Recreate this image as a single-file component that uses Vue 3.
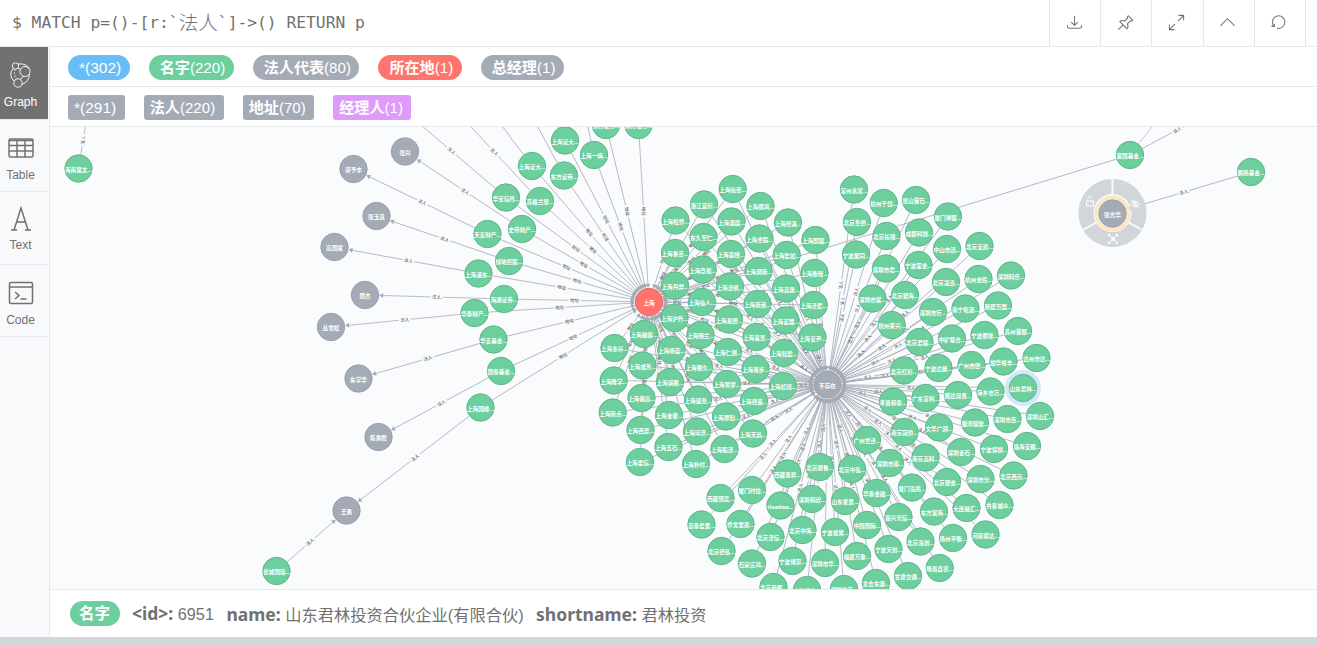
<template>
  <div class="frame">
    <header class="frame-header">
      <div class="query">$ MATCH p=()-[r:`<span class="cjk">法人</span>`]-&gt;() RETURN p</div>
      <div class="actions">
        <button v-for="a in actions" :key="a.name" :aria-label="a.name" class="action">
          <svg width="19" height="19" viewBox="0 0 20 20"><path :d="a.d" /></svg>
        </button>
      </div>
    </header>

    <div class="frame-body">
      <nav class="sidebar">
        <div class="tab tab-graph active">
          <svg width="24" height="28" viewBox="0 0 24 28">
            <circle cx="6.500" cy="5" r="3.200" />
            <circle cx="16" cy="10.500" r="5" />
            <circle cx="9" cy="22" r="4.200" />
            <path d="M9 3Q18 2 20 8M20.500 13Q20 21 13 23.500M4 7.500Q-1 14 5 20M11.500 18.500l3-3.500M9 7l2.500 1.500" />
            <path d="M6 8.500Q4.500 13 7.500 18" stroke-dasharray="1.500 1.500" />
          </svg>
          <span>Graph</span>
        </div>
        <div class="tab tab-table">
          <svg width="26" height="20" viewBox="0 0 26 20">
            <rect x="1" y="1" width="24" height="18" rx="1.500" />
            <path d="M1 2.500h24M1 7.500h24M1 13h24M9 2v17M17 2v17" />
          </svg>
          <span>Table</span>
        </div>
        <div class="tab tab-text">
          <svg width="22" height="26" viewBox="0 0 22 26">
            <path d="M4 24L11 2L18 24M6.500 16h9M1 24h6M15 24h6" />
          </svg>
          <span>Text</span>
        </div>
        <div class="tab tab-code">
          <svg width="26" height="24" viewBox="0 0 26 24">
            <rect x="1.500" y="1.500" width="23" height="21" rx="1.500" />
            <path d="M2 6h22M7 11l4 3.500l-4 3.500M12.500 18h6" />
          </svg>
          <span>Code</span>
        </div>
      </nav>

      <main class="content">
        <div class="legend">
          <span v-for="t in labels" :key="t.name" class="token round" :class="t.color">
            <b>{{ t.name }}</b>({{ t.count }})
          </span>
        </div>
        <div class="legend">
          <span v-for="t in types" :key="t.name" class="token" :class="t.color">
            <b>{{ t.name }}</b>({{ t.count }})
          </span>
        </div>

        <svg class="graph" width="1267" height="462" viewBox="50 127 1267 462">
          <g class="relationships">
            <g v-for="(e, i) in edges" :key="i" :transform="`translate(${e.x} ${e.y}) rotate(${e.angle})`">
              <path v-if="e.len > 16" :class="{ purple: e.purple }" :d="`M14 0H${e.mid - 6}M${e.mid + 6} 0H${e.end - 3}`" />
              <path v-else :d="`M14 0H${e.end - 3}`" />
              <polygon :points="`${e.end},0 ${e.end - 4},-2.5 ${e.end - 4},2.5`" />
              <text v-if="e.labelled" :transform="`translate(${e.mid} 0) rotate(${e.flip ? 180 : 0})`" y="1.600">{{ e.label }}</text>
            </g>
          </g>

          <g class="menu">
            <circle cx="1112.500" cy="213" r="26.500" class="menu-ring" />
            <path class="menu-split" d="M1112.500 195v-16M1097 222l-14 8M1128 222l14 8" />
            <circle cx="1112.500" cy="213.500" r="16" class="menu-halo" />
            <g class="menu-icons">
              <path d="M1086.500 201h7v5h-7zM1088 201v-2.500a1.800 1.800 0 0 1 3.600 0" />
              <path d="M1130.500 204q4.500-6 9 0q-4.500 6-9 0zM1131.500 200l7 8" />
              <circle cx="1135" cy="204" r="1.500" />
              <path d="M1109 235l8 8M1117 235l-8 8M1108.500 236.500v-2h2M1115.500 234.500h2v2M1117.500 241.500v2h-2M1110.500 243.500h-2v-2" />
              <circle cx="1113" cy="239" r="1.500" />
            </g>
          </g>

          <circle cx="1023" cy="388" r="16" class="selected" />
          <g v-for="(n, i) in nodes" :key="i" class="node" :class="n.kind">
            <circle :cx="n.x" :cy="n.y" r="13.700" />
            <text :x="n.x" :y="n.y + 3">{{ n.name }}</text>
          </g>
        </svg>

        <footer class="inspector">
          <span class="token round green"><b>名字</b></span>
          <span v-for="p in props" :key="p.key" class="pair"><b>{{ p.key }}:</b> {{ p.value }}</span>
        </footer>
      </main>
    </div>
  </div>
</template>

<script setup>
const actions = [
  { name: 'download', d: 'M10 3v10M6.500 9.500L10 13l3.500-3.500M2.500 13v1q0 2 2 2h11q2 0 2-2v-1' },
  { name: 'pin', d: 'M2.500 17.500l5-5M4 9q2-2 5-.5l3-3q-.5-2 1-2.500l4.500 4.500q-1 1.500-2.500 1l-3 3q1.500 3-.5 5z' },
  { name: 'expand', d: 'M11.500 8.500l5.500-5.500M12 2.500h5.500v5.500M8.500 11.500L3 17M2.500 12v5.500h5.500' },
  { name: 'collapse', d: 'M2.500 13.500L10 6l7.500 7.500' },
  { name: 'rerun', d: 'M8.500 16a6.600 6.600 0 1 0-4.300-3.500l.8 2M2.500 13.500l2.800 1l.7-3' }
]

const labels = [
  { name: '*', count: 302, color: 'blue star' },
  { name: '名字', count: 220, color: 'green' },
  { name: '法人代表', count: 80, color: 'gray' },
  { name: '所在地', count: 1, color: 'red' },
  { name: '总经理', count: 1, color: 'gray' }
]

const types = [
  { name: '*', count: 291, color: 'gray star' },
  { name: '法人', count: 220, color: 'gray' },
  { name: '地址', count: 70, color: 'gray' },
  { name: '经理人', count: 1, color: 'violet' }
]

const props = [
  { key: '<id>', value: '6951' },
  { key: 'name', value: '山东君林投资合伙企业(有限合伙)' },
  { key: 'shortname', value: '君林投资' }
]

const shanghai = { name: '上海', x: 649, y: 302, kind: 'red' }
const missing = { name: '不存在', x: 827.5, y: 384.5, kind: 'gray' }

// company, its position, then legal person and position (no name = outside of the view)
const west = [
  ['华宝信托', 506, 197.5, '', 394, 102],
  ['史带财产', 522, 229, '张兴', 405, 151.5],
  ['天安财产', 487.5, 234, '郭予丰', 353.5, 169],
  ['绿地控股', 509, 261, '张玉良', 376.5, 216],
  ['上海浦东', 478.5, 273.5, '高国富', 334.5, 247],
  ['海通证券', 504, 299, '周杰', 365, 295],
  ['华泰财产', 474.5, 313, '丛雪松', 331, 327],
  ['华安基金', 493.5, 339.5, '朱学华', 358.5, 378.5],
  ['国泰基金', 501, 371, '陈勇胜', 378.5, 437],
  ['上海国峰', 480.5, 407.5, '王勇', 346.5, 510.5],
  ['上海证大', 532, 166, '', 460, 70],
  ['苏格兰皇', 540, 201, '', 446, 100],
  ['上海证大', 565, 140.5, '', 520, 50],
  ['东方证券', 564, 175.5, '', 496, 49],
  ['上海一嗨', 594, 155, '', 575, 66],
  ['东方证券', 606, 125, '', 590, 40],
  ['南方银行', 638.5, 125, '', 634, 40]
]

const center = [
  ['上海仙密', 732.7, 189], ['浙江蓝衍', 704, 204.5], ['上海松乔', 675.5, 220.5], ['上海携鸿', 760.5, 206],
  ['上海温度', 731.5, 221.5], ['东久至仁', 703.5, 237], ['上海径溪', 788, 222.5], ['上海麒翼', 815.5, 240],
  ['上海卓毅', 759.5, 238.5], ['上海鲁芸', 675, 253], ['上海森焯', 731, 254], ['上海盈如', 786.7, 255],
  ['上海奇船', 702.7, 269.5], ['上海漪新', 758.5, 271], ['上海衡锋', 814.5, 273], ['上海丹羿', 675, 285.5],
  ['上海泽帆', 730, 286.5], ['上海高晟', 786, 288.5], ['上海仙人', 702, 302], ['上海新弟', 757.5, 304],
  ['上海泽熙', 813.7, 305], ['上海沪升', 674.5, 318], ['上海易德', 729, 319.5], ['上海蓝慧', 785.5, 320.5],
  ['上海融容', 644, 334], ['上海颐兰', 700.5, 335], ['上海喜昱', 756.5, 337], ['上海安尹', 812.5, 337.5],
  ['上海东开', 614.5, 348], ['上海成芳', 642.5, 365.5], ['上海祷蓝', 671.5, 350], ['上海仁测', 728, 352],
  ['上海知盈', 784, 353], ['上海隆学', 613.7, 380.5], ['上海诚鼎', 670, 382], ['上海磐久', 699, 367],
  ['上海骞步', 755.5, 369], ['上海虹琦', 783, 386], ['上海誓梦', 727, 384], ['上海傲高', 641.5, 398],
  ['上海新点', 612.7, 412.5], ['上海金鎏', 669, 415], ['上海盛尧', 698, 399.5], ['上海德嘉', 754, 401],
  ['上海厚阳', 726, 416.5], ['上海西宽', 640.5, 430], ['上海琗济', 697, 431.5], ['上海天玑', 753, 433.5],
  ['上海五石', 668.5, 447], ['上海股泽', 724.5, 449], ['上海朴时', 696, 464], ['上海柔信', 640, 462]
]

const east = [
  ['常州永宣', 854, 189.5], ['杭州千岱', 883.7, 203], ['昆山雷石', 916, 200], ['北京阜德', 857, 222],
  ['北京拓领', 886.5, 236], ['厦门弹翼', 948, 216.5], ['成都科创', 919, 232.5], ['宁波聚同', 856, 254.5],
  ['中山市迅', 947, 249], ['北京安逅', 979.5, 246], ['深圳市君', 886, 268.5], ['宁波霍金', 918.5, 265],
  ['北京凌迅', 946, 282], ['杭州金砖', 978.5, 279], ['深圳科乐', 1011, 275.5], ['深圳市富', 872.5, 298.5],
  ['北京碧海', 905, 295], ['深圳市巨', 933, 312], ['南宁乾涎', 965.5, 308.5], ['新疆万盟', 998, 305.5],
  ['杭州来兴', 891.7, 325], ['北京君联', 919.5, 342], ['中矿联合', 952, 338.5], ['宁波鼎锋', 984.5, 335],
  ['苏州雷郡', 1018, 331], ['北京红杉', 904, 370.5], ['宁波达晨', 938.5, 368], ['广州市德', 971.5, 365],
  ['加华裕丰', 1003.5, 361.5], ['达州市达', 1036.5, 358], ['孝昌和泰', 893, 401.5], ['广东宜利', 925.5, 398],
  ['腾达双鑫', 958, 395], ['萍乡市万', 990.5, 391.5], ['山东君林', 1023, 388], ['南京冠侨', 904.5, 432],
  ['文华广润', 939, 427.5], ['廊湾瑞智', 975, 422.5], ['深圳市百', 1007.5, 419], ['深圳山汇', 1040, 416],
  ['广州世泽', 867, 440], ['南京高科', 925.5, 457.5], ['深圳金石', 961, 452], ['宁波保税', 994, 449],
  ['珠海安赐', 1027, 446], ['深圳市南', 890, 463], ['北京塑金', 947, 482], ['深圳市分', 980.5, 479],
  ['北京西元', 1013.5, 475.5], ['北京中弘', 852, 469], ['厦门泓兆', 912, 487.5], ['华泰金融', 876.5, 493],
  ['东方富海', 934, 511.5], ['大连融汇', 966.5, 508], ['共青城众', 999.5, 505], ['山东星景', 845, 501],
  ['嘉兴光信', 898.5, 517], ['河南睿达', 985.5, 534.5], ['中国国际', 867, 525], ['扬州平衡', 953, 538],
  ['宁波恳寓', 835, 532], ['北京泓创', 920.5, 541.5], ['宁波天创', 888.5, 549], ['隆昌县农', 939.7, 568],
  ['福建万象', 857, 556], ['甘肃交通', 908, 576], ['太仓东源', 876, 583], ['深圳市芬', 844, 589],
  ['北京观鲁', 819.7, 467], ['西藏泰昇', 787.5, 473.5], ['厦门时位', 752, 490], ['西藏郅奕', 720.5, 498],
  ['Headwa', 780.5, 505.5], ['深圳和欣', 812, 499], ['高泰盈景', 701.5, 524.5], ['乔戈里资', 740.5, 524],
  ['北京泽信', 770.5, 537], ['北京中海', 802.5, 530], ['北京德弘', 721.5, 551], ['石家庄鸿', 752, 563.5],
  ['宁波博见', 792.5, 561], ['深圳市华', 825, 563], ['北京新鼎', 773.5, 587], ['宁波梅山', 807, 590]
]

const nodes = []
const edges = []

function node(name, x, y, kind = 'green') {
  const n = { name: kind === 'green' ? name + '...' : name, x, y, kind }
  nodes.push(n)
  return n
}

function link(from, to, label, purple = false) {
  const dx = to.x - from.x
  const dy = to.y - from.y
  const dist = Math.hypot(dx, dy)
  const mid = (dist - 4) / 2
  edges.push({
    x: from.x,
    y: from.y,
    angle: Math.atan2(dy, dx) * 180 / Math.PI,
    len: dist - 28,
    mid,
    end: dist - 14.2,
    flip: dx < 0,
    // no caption on very short lines or above the visible area
    labelled: dist > 42 && from.y + dy * mid / dist > 126,
    label,
    purple
  })
}

west.forEach(([name, x, y, person, px, py]) => {
  const n = node(name, x, y)
  const p = person ? node(person, px, py, 'gray') : { x: px, y: py }
  link(n, p, '法人')
  link(n, shanghai, '地址')
})

center.forEach(([name, x, y]) => {
  const n = node(name, x, y)
  link(n, shanghai, '地址')
  link(n, missing, '法人')
})

east.forEach(([name, x, y]) => link(node(name, x, y), missing, '法人'))

link(node('长城国瑞', 276.5, 571), { x: 346.5, y: 510.5 }, '法人')
link(node('海南富太', 78.5, 168.5), { x: 88.5, y: 108 }, '法人')

const fund = node('富国基金', 1130, 155)
link(fund, shanghai, '地址')
link(fund, { x: 1228, y: 103 }, '法人')
link(fund, { x: 1190, y: 78 }, '经理人', true)

const person = node('张光华', 1112.5, 213.5, 'gray')
link(node('鹏扬基金', 1251, 172), person, '法人')

nodes.push(shanghai, missing)
</script>

<style>
body {
  margin: 0;
  overflow: hidden;
  background: #d2d5da;
}
</style>

<style scoped>
.frame {
  height: 637px;
  background: #fff;
  color: #717172;
  font-family: 'Liberation Sans', 'Noto Sans CJK SC', sans-serif;
  box-shadow: 0 1px 4px rgba(0, 0, 0, 0.2);
}

.frame-header {
  display: flex;
  justify-content: space-between;
  height: 46px;
  border-bottom: 1px solid #e6e9ef;
}

.query {
  padding-left: 12px;
  font: 16.3px/46px 'DejaVu Sans Mono', 'Noto Sans CJK SC', monospace;
  white-space: pre;
}
.query .cjk {
  font-family: 'Noto Sans CJK SC', sans-serif;
  font-size: 19.6px;
  font-weight: 300;
  line-height: 1;
  vertical-align: -2px;
}

.actions {
  display: flex;
  padding-right: 11px;
  width: 257px;
}
.action {
  flex: 1;
  display: flex;
  align-items: center;
  justify-content: center;
  padding: 0 2px 1px 0;
  border: 0;
  border-left: 1px solid #e6e9ef;
  background: none;
}
.action:last-child {
  border-right: 1px solid #e6e9ef;
}
.action svg {
  fill: none;
  stroke: #717172;
  stroke-width: 1.1;
}

.frame-body {
  display: flex;
  height: 590px;
}

.sidebar {
  flex: none;
  box-sizing: border-box;
  width: 50px;
  background: #f8f9fb;
  border-right: 1px solid #e6e9ef;
}
.tab {
  box-sizing: border-box;
  display: flex;
  flex-direction: column;
  align-items: center;
  width: 48px;
  height: 73px;
  padding-right: 7px;
  border-bottom: 1px solid #e6e9ef;
  font-size: 12px;
  line-height: 14px;
}
.tab svg {
  fill: none;
  stroke: #717172;
  stroke-width: 1.5;
}
.tab-graph {
  padding-top: 14px;
}
.tab-graph svg {
  stroke: #fff;
  stroke-width: 0.9;
}
.tab-graph span {
  margin-top: 6px;
}
.active {
  background: #717172;
  color: #fff;
}
.tab-table {
  height: 72px;
  padding-top: 18px;
}
.tab-table span {
  margin-top: 10px;
}
.tab-text {
  padding-top: 14px;
}
.tab-text span {
  margin-top: 6px;
}
.tab-code {
  height: 72px;
  padding-top: 16px;
}
.tab-code span {
  margin-top: 8px;
}

.content {
  flex: 1;
  min-width: 0;
}

.legend {
  display: flex;
  align-items: center;
  gap: 19px;
  height: 38px;
  padding: 1px 18px 0;
  border-bottom: 1px solid #e6e9ef;
}

.token {
  height: 25px;
  padding: 0 8.5px 0 6px;
  border-radius: 3px;
  color: #fff;
  font-size: 15.1px;
  line-height: 25px;
  white-space: nowrap;
}
.token.round {
  padding: 0 8.5px 0 11px;
  border-radius: 13px;
}
.token.star {
  font-size: 15.5px;
}
.token.star b {
  font-weight: 400;
}
.blue { background: #68bdf6; }
.green { background: #6dce9e; }
.gray { background: #a5abb6; }
.red { background: #ff756e; }
.violet { background: #de9bf9; }

.graph {
  display: block;
  background: #f9fbfd;
}
.relationships path {
  fill: none;
  stroke: #a5abb6;
  stroke-width: 0.75;
}
.relationships path.purple {
  stroke: #de9bf9;
}
.relationships polygon {
  fill: #a5abb6;
}
.relationships text {
  fill: #444;
  font-size: 4.5px;
  text-anchor: middle;
}

.node circle {
  stroke-width: 1;
}
.node text {
  fill: #fff;
  font-size: 5.6px;
  font-weight: 700;
  text-anchor: middle;
}
.node.green,
.node.gray,
.node.red {
  background: none;
}
.node.green circle { fill: #6dce9e; stroke: #60b58b; }
.node.gray circle { fill: #a5abb6; stroke: #9aa1ac; }
.node.red circle { fill: #ff756e; stroke: #e06760; }

.selected {
  fill: none;
  stroke: #cfe8fd;
  stroke-width: 4;
}
.menu-ring {
  fill: none;
  stroke: #d2d5da;
  stroke-width: 15;
}
.menu-split {
  stroke: #f9fbfd;
  stroke-width: 2;
}
.menu-halo {
  fill: none;
  stroke: #fbe8bf;
  stroke-width: 4;
}
.menu-icons {
  fill: none;
  stroke: #fff;
  stroke-width: 1;
}

.inspector {
  box-sizing: border-box;
  display: flex;
  align-items: center;
  height: 48px;
  padding: 2px 20px 0;
  border-top: 1px solid #e6e9ef;
  font-size: 16.25px;
}
.inspector .token {
  padding: 0 10px 0 9px;
  margin: 0 12px 3px 0;
}
.inspector .token b {
  font-size: 15.5px;
}
.pair {
  margin: 0 12.5px 2px 0;
  white-space: nowrap;
}
.pair b {
  font: 700 17.5px/20px 'Noto Sans', sans-serif;
}
</style>
